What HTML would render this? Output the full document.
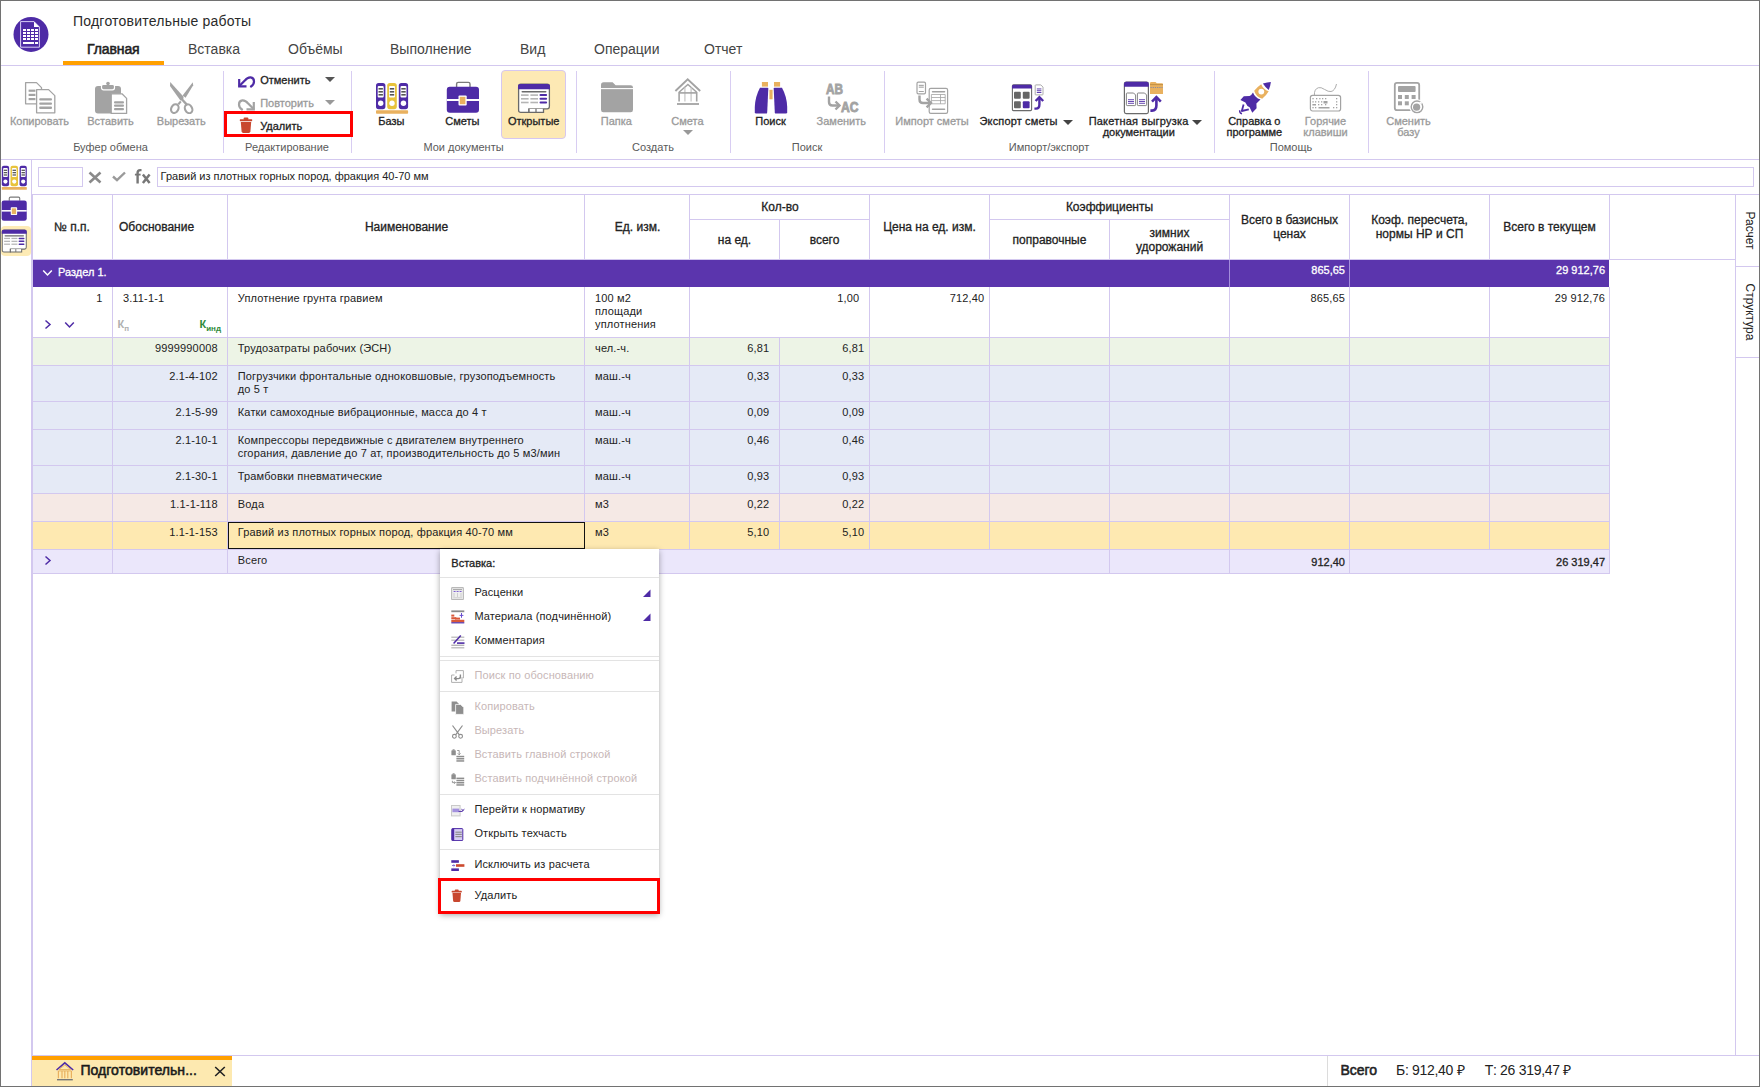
<!DOCTYPE html><html><head><meta charset="utf-8"><style>
html,body{margin:0;padding:0;}
body{width:1760px;height:1087px;position:relative;overflow:hidden;background:#fff;font-family:"Liberation Sans",sans-serif;}
.t{position:absolute;white-space:nowrap;}
.r{position:absolute;}
</style></head><body>
<svg class="r" style="left:13px;top:16px" width="36" height="36" viewBox="0 0 36 36"><circle cx="18" cy="18.4" r="17.5" fill="#4e2ba6"/>
<path d="M7.6 5.6 H21 L26.4 11 V31.2 H7.6 Z" fill="none" stroke="#d9cff5" stroke-width="1"/>
<path d="M21 5.6 V11 H26.4 Z" fill="#fff"/>
<g fill="#fff">
<rect x="10" y="13" width="3" height="2"/><rect x="14" y="13" width="3" height="2"/><rect x="18" y="13" width="3" height="2"/><rect x="22" y="13" width="3" height="2"/>
<rect x="10" y="16" width="3" height="2"/><rect x="14" y="16" width="3" height="2"/><rect x="18" y="16" width="3" height="2"/><rect x="22" y="16" width="3" height="2"/>
<rect x="10" y="19" width="3" height="2"/><rect x="14" y="19" width="3" height="2"/><rect x="18" y="19" width="3" height="2"/><rect x="22" y="19" width="3" height="2"/>
<rect x="10" y="22" width="3" height="2"/><rect x="14" y="22" width="3" height="2"/><rect x="18" y="22" width="3" height="2"/><rect x="22" y="22" width="3" height="2"/>
<rect x="10" y="26" width="11" height="2"/><rect x="22" y="26" width="3" height="2"/>
</g></svg>
<div class="t" style="top:14.00px;font-size:14px;line-height:14px;color:#2a2a2a;letter-spacing:0.22px;left:73px;">Подготовительные работы</div>
<div class="t" style="top:42.00px;font-size:14px;line-height:14px;color:#222;-webkit-text-stroke:0.55px #222;letter-spacing:-0.1px;left:87px;">Главная</div>
<div class="t" style="top:42.00px;font-size:14px;line-height:14px;color:#444;left:188px;">Вставка</div>
<div class="t" style="top:42.00px;font-size:14px;line-height:14px;color:#444;left:288px;">Объёмы</div>
<div class="t" style="top:42.00px;font-size:14px;line-height:14px;color:#444;left:390px;">Выполнение</div>
<div class="t" style="top:42.00px;font-size:14px;line-height:14px;color:#444;left:520px;">Вид</div>
<div class="t" style="top:42.00px;font-size:14px;line-height:14px;color:#444;left:594px;">Операции</div>
<div class="t" style="top:42.00px;font-size:14px;line-height:14px;color:#444;left:704px;">Отчет</div>
<div class="r" style="left:63px;top:61px;width:101px;height:4px;background:#ffa000;"></div>
<div class="r" style="left:1px;top:65px;width:1758px;height:1px;background:#d3c8ef;"></div>
<div class="r" style="left:1px;top:159px;width:1758px;height:1px;background:#d3c8ef;"></div>
<div class="r" style="left:223px;top:71px;width:1px;height:82px;background:#d8cdf2;"></div>
<div class="r" style="left:351px;top:71px;width:1px;height:82px;background:#d8cdf2;"></div>
<div class="r" style="left:576px;top:71px;width:1px;height:82px;background:#d8cdf2;"></div>
<div class="r" style="left:730px;top:71px;width:1px;height:82px;background:#d8cdf2;"></div>
<div class="r" style="left:884px;top:71px;width:1px;height:82px;background:#d8cdf2;"></div>
<div class="r" style="left:1214px;top:71px;width:1px;height:82px;background:#d8cdf2;"></div>
<div class="r" style="left:1368px;top:71px;width:1px;height:82px;background:#d8cdf2;"></div>
<div class="t" style="top:142.00px;font-size:11px;line-height:11px;color:#5a5a5a;left:-189.5px;width:600px;text-align:center;">Буфер обмена</div>
<div class="t" style="top:142.00px;font-size:11px;line-height:11px;color:#5a5a5a;left:-13px;width:600px;text-align:center;">Редактирование</div>
<div class="t" style="top:142.00px;font-size:11px;line-height:11px;color:#5a5a5a;left:163.5px;width:600px;text-align:center;">Мои документы</div>
<div class="t" style="top:142.00px;font-size:11px;line-height:11px;color:#5a5a5a;left:353px;width:600px;text-align:center;">Создать</div>
<div class="t" style="top:142.00px;font-size:11px;line-height:11px;color:#5a5a5a;left:507px;width:600px;text-align:center;">Поиск</div>
<div class="t" style="top:142.00px;font-size:11px;line-height:11px;color:#5a5a5a;left:749px;width:600px;text-align:center;">Импорт/экспорт</div>
<div class="t" style="top:142.00px;font-size:11px;line-height:11px;color:#5a5a5a;left:991px;width:600px;text-align:center;">Помощь</div>
<div class="t" style="top:116.00px;font-size:11px;line-height:11px;color:#9a9a9a;-webkit-text-stroke:0.3px #9a9a9a;left:-260.5px;width:600px;text-align:center;">Копировать</div>
<div class="t" style="top:116.00px;font-size:11px;line-height:11px;color:#9a9a9a;-webkit-text-stroke:0.3px #9a9a9a;left:-189.5px;width:600px;text-align:center;">Вставить</div>
<div class="t" style="top:116.00px;font-size:11px;line-height:11px;color:#9a9a9a;-webkit-text-stroke:0.3px #9a9a9a;left:-118.69999999999999px;width:600px;text-align:center;">Вырезать</div>
<div class="t" style="top:116.00px;font-size:11px;line-height:11px;color:#222;-webkit-text-stroke:0.3px #222;left:91.30000000000001px;width:600px;text-align:center;">Базы</div>
<div class="t" style="top:116.00px;font-size:11px;line-height:11px;color:#222;-webkit-text-stroke:0.3px #222;left:162.39999999999998px;width:600px;text-align:center;">Сметы</div>
<div class="r" style="left:501px;top:70px;width:65px;height:69px;background:#fde9b4;border:1px solid #d6c7f0;border-radius:4px;box-sizing:border-box;"></div>
<div class="t" style="top:116.00px;font-size:11px;line-height:11px;color:#222;-webkit-text-stroke:0.3px #222;left:233.70000000000005px;width:600px;text-align:center;">Открытые</div>
<div class="t" style="top:116.00px;font-size:11px;line-height:11px;color:#9a9a9a;-webkit-text-stroke:0.3px #9a9a9a;left:316.29999999999995px;width:600px;text-align:center;">Папка</div>
<div class="t" style="top:116.00px;font-size:11px;line-height:11px;color:#9a9a9a;-webkit-text-stroke:0.3px #9a9a9a;left:387.5px;width:600px;text-align:center;">Смета</div>
<div class="t" style="top:116.00px;font-size:11px;line-height:11px;color:#222;-webkit-text-stroke:0.3px #222;left:470.5px;width:600px;text-align:center;">Поиск</div>
<div class="t" style="top:116.00px;font-size:11px;line-height:11px;color:#9a9a9a;-webkit-text-stroke:0.3px #9a9a9a;left:541.3px;width:600px;text-align:center;">Заменить</div>
<div class="t" style="top:116.00px;font-size:11px;line-height:11px;color:#9a9a9a;-webkit-text-stroke:0.3px #9a9a9a;left:632px;width:600px;text-align:center;">Импорт сметы</div>
<div class="t" style="top:116.00px;font-size:11px;line-height:11px;color:#222;-webkit-text-stroke:0.3px #222;letter-spacing:0.15px;left:979.5px;">Экспорт сметы</div>
<div class="t" style="top:116.00px;font-size:11px;line-height:11px;color:#222;-webkit-text-stroke:0.3px #222;letter-spacing:0.2px;left:1088.7px;">Пакетная выгрузка</div>
<div class="t" style="top:127.00px;font-size:11px;line-height:11px;color:#222;-webkit-text-stroke:0.3px #222;left:838.8px;width:600px;text-align:center;">документации</div>
<div class="t" style="top:116.00px;font-size:11px;line-height:11px;color:#222;-webkit-text-stroke:0.3px #222;left:954.3px;width:600px;text-align:center;">Справка о</div>
<div class="t" style="top:127.00px;font-size:11px;line-height:11px;color:#222;-webkit-text-stroke:0.3px #222;left:954.3px;width:600px;text-align:center;">программе</div>
<div class="t" style="top:116.00px;font-size:11px;line-height:11px;color:#9a9a9a;-webkit-text-stroke:0.3px #9a9a9a;left:1025.5px;width:600px;text-align:center;">Горячие</div>
<div class="t" style="top:127.00px;font-size:11px;line-height:11px;color:#9a9a9a;-webkit-text-stroke:0.3px #9a9a9a;left:1025.5px;width:600px;text-align:center;">клавиши</div>
<div class="t" style="top:116.00px;font-size:11px;line-height:11px;color:#9a9a9a;-webkit-text-stroke:0.3px #9a9a9a;left:1108.5px;width:600px;text-align:center;">Сменить</div>
<div class="t" style="top:127.00px;font-size:11px;line-height:11px;color:#9a9a9a;-webkit-text-stroke:0.3px #9a9a9a;left:1108.5px;width:600px;text-align:center;">базу</div>
<div class="t" style="top:75.00px;font-size:11px;line-height:11px;color:#222;-webkit-text-stroke:0.3px #222;left:260.2px;">Отменить</div>
<div class="t" style="top:98.00px;font-size:11px;line-height:11px;color:#9a9a9a;-webkit-text-stroke:0.3px #9a9a9a;left:260.2px;">Повторить</div>
<div class="t" style="top:121.00px;font-size:11px;line-height:11px;color:#222;-webkit-text-stroke:0.3px #222;left:260.2px;">Удалить</div>
<svg class="r" style="left:325px;top:77px" width="10" height="5" viewBox="0 0 10 5"><path d="M0 0 H10 L5.0 5 Z" fill="#555"/></svg>
<svg class="r" style="left:325px;top:100px" width="10" height="5" viewBox="0 0 10 5"><path d="M0 0 H10 L5.0 5 Z" fill="#999"/></svg>
<svg class="r" style="left:682.5px;top:130px" width="10" height="5" viewBox="0 0 10 5"><path d="M0 0 H10 L5.0 5 Z" fill="#999"/></svg>
<svg class="r" style="left:1062.5px;top:119.5px" width="10" height="5" viewBox="0 0 10 5"><path d="M0 0 H10 L5.0 5 Z" fill="#444"/></svg>
<svg class="r" style="left:1192px;top:119.5px" width="10" height="5" viewBox="0 0 10 5"><path d="M0 0 H10 L5.0 5 Z" fill="#444"/></svg>
<div class="r" style="left:31px;top:160px;width:1px;height:926px;background:#d3c8ef;"></div>
<div class="r" style="left:1px;top:226px;width:30px;height:30px;background:#fdebb5;border-radius:4px;"></div>
<div class="r" style="left:38px;top:167px;width:45px;height:20px;background:#fff;border:1px solid #d3c8ef;box-sizing:border-box;"></div>
<div class="r" style="left:157px;top:167px;width:1597px;height:20px;background:#fff;border:1px solid #d3c8ef;box-sizing:border-box;"></div>
<svg class="r" style="left:88px;top:171px" width="14" height="13" viewBox="0 0 14 13"><path d="M1.5 1.5 L12.5 11.5 M12.5 1.5 L1.5 11.5" stroke="#8a8a8a" stroke-width="2.6" fill="none"/></svg>
<svg class="r" style="left:112px;top:171px" width="14" height="11" viewBox="0 0 14 11"><path d="M1 5.5 L5 9.2 L13 1.5" stroke="#9a9a9a" stroke-width="2.4" fill="none"/></svg>
<svg class="r" style="left:134px;top:168px" width="18" height="17" viewBox="0 0 18 17"><path d="M3.6 15.4 V4.8 Q3.6 2.1 6.1 2.1 H7.5" stroke="#777" stroke-width="2.4" fill="none"/><path d="M0.9 6.6 H6.6" stroke="#777" stroke-width="1.8"/><path d="M8.9 6.4 L15.6 14.9 M15.6 6.4 L8.9 14.9" stroke="#777" stroke-width="2.5"/></svg>
<div class="t" style="top:171.00px;font-size:11px;line-height:11px;color:#222;left:160.6px;">Гравий из плотных горных пород, фракция 40-70 мм</div>
<div class="r" style="left:32px;top:194px;width:1727px;height:1px;background:#d3c8ef;"></div>
<div class="r" style="left:1735px;top:194px;width:1px;height:861px;background:#d3c8ef;"></div>
<div class="r" style="left:32px;top:194px;width:1px;height:861px;background:#d3c8ef;"></div>
<div class="r" style="left:32px;top:1055px;width:1727px;height:1px;background:#d3c8ef;"></div>
<div class="r" style="left:1736px;top:266px;width:23px;height:1px;background:#d3c8ef;"></div>
<div class="r" style="left:1736px;top:357px;width:23px;height:1px;background:#d3c8ef;"></div>
<div class="t" style="left:1737.5px;top:195px;width:23px;height:71px;"><div style="position:absolute;left:23px;top:0;transform-origin:0 0;transform:rotate(90deg);width:71px;height:23px;line-height:23px;text-align:center;font-size:12px;color:#222;">Расчет</div></div>
<div class="t" style="left:1737.5px;top:267px;width:23px;height:90px;"><div style="position:absolute;left:23px;top:0;transform-origin:0 0;transform:rotate(90deg);width:90px;height:23px;line-height:23px;text-align:center;font-size:12px;color:#222;">Структура</div></div>
<div class="r" style="left:33px;top:195px;width:1576px;height:65px;background:#fff;"></div>
<div class="r" style="left:112px;top:195px;width:1px;height:65px;background:#d3c8ef;"></div>
<div class="r" style="left:227px;top:195px;width:1px;height:65px;background:#d3c8ef;"></div>
<div class="r" style="left:584px;top:195px;width:1px;height:65px;background:#d3c8ef;"></div>
<div class="r" style="left:689px;top:195px;width:1px;height:65px;background:#d3c8ef;"></div>
<div class="r" style="left:779px;top:195px;width:1px;height:65px;background:#d3c8ef;"></div>
<div class="r" style="left:869px;top:195px;width:1px;height:65px;background:#d3c8ef;"></div>
<div class="r" style="left:989px;top:195px;width:1px;height:65px;background:#d3c8ef;"></div>
<div class="r" style="left:1109px;top:195px;width:1px;height:65px;background:#d3c8ef;"></div>
<div class="r" style="left:1229px;top:195px;width:1px;height:65px;background:#d3c8ef;"></div>
<div class="r" style="left:1349px;top:195px;width:1px;height:65px;background:#d3c8ef;"></div>
<div class="r" style="left:1489px;top:195px;width:1px;height:65px;background:#d3c8ef;"></div>
<div class="r" style="left:1609px;top:195px;width:1px;height:65px;background:#d3c8ef;"></div>
<div class="r" style="left:1609px;top:259px;width:126px;height:1px;background:#d3c8ef;"></div>
<div class="r" style="left:690px;top:195px;width:179px;height:24px;background:#fff;"></div>
<div class="r" style="left:990px;top:195px;width:239px;height:24px;background:#fff;"></div>
<div class="r" style="left:1109px;top:195px;width:1px;height:0px;background:#d3c8ef;"></div>
<div class="r" style="left:689px;top:219px;width:180px;height:1px;background:#d3c8ef;"></div>
<div class="r" style="left:989px;top:219px;width:240px;height:1px;background:#d3c8ef;"></div>
<div class="t" style="top:221.00px;font-size:12px;line-height:12px;color:#222;-webkit-text-stroke:0.3px #222;left:-228px;width:600px;text-align:center;">№ п.п.</div>
<div class="t" style="top:221.00px;font-size:12px;line-height:12px;color:#222;-webkit-text-stroke:0.3px #222;left:119px;">Обоснование</div>
<div class="t" style="top:221.00px;font-size:12px;line-height:12px;color:#222;-webkit-text-stroke:0.3px #222;left:106.5px;width:600px;text-align:center;">Наименование</div>
<div class="t" style="top:221.00px;font-size:12px;line-height:12px;color:#222;-webkit-text-stroke:0.3px #222;left:337.5px;width:600px;text-align:center;">Ед. изм.</div>
<div class="t" style="top:201.00px;font-size:12px;line-height:12px;color:#222;-webkit-text-stroke:0.3px #222;left:480px;width:600px;text-align:center;">Кол-во</div>
<div class="t" style="top:234.00px;font-size:12px;line-height:12px;color:#222;-webkit-text-stroke:0.3px #222;left:434.5px;width:600px;text-align:center;">на ед.</div>
<div class="t" style="top:234.00px;font-size:12px;line-height:12px;color:#222;-webkit-text-stroke:0.3px #222;left:524.5px;width:600px;text-align:center;">всего</div>
<div class="t" style="top:221.00px;font-size:12px;line-height:12px;color:#222;-webkit-text-stroke:0.3px #222;left:629.5px;width:600px;text-align:center;">Цена на ед. изм.</div>
<div class="t" style="top:201.00px;font-size:12px;line-height:12px;color:#222;-webkit-text-stroke:0.3px #222;left:809.5px;width:600px;text-align:center;">Коэффициенты</div>
<div class="t" style="top:234.00px;font-size:12px;line-height:12px;color:#222;-webkit-text-stroke:0.3px #222;left:749.5px;width:600px;text-align:center;">поправочные</div>
<div class="t" style="top:227.00px;font-size:12px;line-height:12px;color:#222;-webkit-text-stroke:0.3px #222;left:869.5px;width:600px;text-align:center;">зимних</div>
<div class="t" style="top:241.00px;font-size:12px;line-height:12px;color:#222;-webkit-text-stroke:0.3px #222;left:869.5px;width:600px;text-align:center;">удорожаний</div>
<div class="t" style="top:214.00px;font-size:12px;line-height:12px;color:#222;-webkit-text-stroke:0.3px #222;left:989.5px;width:600px;text-align:center;">Всего в базисных</div>
<div class="t" style="top:228.00px;font-size:12px;line-height:12px;color:#222;-webkit-text-stroke:0.3px #222;left:989.5px;width:600px;text-align:center;">ценах</div>
<div class="t" style="top:214.00px;font-size:12px;line-height:12px;color:#222;-webkit-text-stroke:0.3px #222;left:1119.5px;width:600px;text-align:center;">Коэф. пересчета,</div>
<div class="t" style="top:228.00px;font-size:12px;line-height:12px;color:#222;-webkit-text-stroke:0.3px #222;left:1119.5px;width:600px;text-align:center;">нормы НР и СП</div>
<div class="t" style="top:221.00px;font-size:12px;line-height:12px;color:#222;-webkit-text-stroke:0.3px #222;left:1249.5px;width:600px;text-align:center;">Всего в текущем</div>
<div class="r" style="left:32px;top:259px;width:1577px;height:1px;background:#d3c8ef;"></div>
<div class="r" style="left:33px;top:260px;width:1576px;height:27px;background:#5b35ad;"></div>
<div class="r" style="left:1229px;top:260px;width:1px;height:27px;background:#a48ddc;"></div>
<div class="r" style="left:1349px;top:260px;width:1px;height:27px;background:#a48ddc;"></div>
<svg class="r" style="left:42px;top:269px" width="11" height="8" viewBox="0 0 11 8"><path d="M1.2 1.5 L5.5 6 L9.8 1.5" stroke="#fff" stroke-width="1.5" fill="none"/></svg>
<div class="t" style="top:267.00px;font-size:11px;line-height:11px;color:#fff;-webkit-text-stroke:0.3px #fff;left:58px;">Раздел 1.</div>
<div class="t" style="top:265.00px;font-size:11px;line-height:11px;color:#fff;-webkit-text-stroke:0.3px #fff;right:415px;text-align:right;">865,65</div>
<div class="t" style="top:265.00px;font-size:11px;line-height:11px;color:#fff;-webkit-text-stroke:0.3px #fff;right:155px;text-align:right;">29 912,76</div>
<div class="r" style="left:33px;top:287px;width:1576px;height:50px;background:#ffffff;"></div>
<div class="r" style="left:33px;top:337px;width:1576px;height:28px;background:#edf4e6;"></div>
<div class="r" style="left:33px;top:365px;width:1576px;height:36px;background:#e5eaf6;"></div>
<div class="r" style="left:33px;top:401px;width:1576px;height:28px;background:#e5eaf6;"></div>
<div class="r" style="left:33px;top:429px;width:1576px;height:36px;background:#e5eaf6;"></div>
<div class="r" style="left:33px;top:465px;width:1576px;height:28px;background:#e5eaf6;"></div>
<div class="r" style="left:33px;top:493px;width:1576px;height:28px;background:#f5e9e5;"></div>
<div class="r" style="left:33px;top:521px;width:1576px;height:28px;background:#fee9b1;"></div>
<div class="r" style="left:33px;top:549px;width:1576px;height:24px;background:#ebe7fb;"></div>
<div class="r" style="left:32px;top:337px;width:1578px;height:1px;background:#d3c8ef;"></div>
<div class="r" style="left:112px;top:287px;width:1px;height:50px;background:#d3c8ef;"></div>
<div class="r" style="left:227px;top:287px;width:1px;height:50px;background:#d3c8ef;"></div>
<div class="r" style="left:584px;top:287px;width:1px;height:50px;background:#d3c8ef;"></div>
<div class="r" style="left:689px;top:287px;width:1px;height:50px;background:#d3c8ef;"></div>
<div class="r" style="left:869px;top:287px;width:1px;height:50px;background:#d3c8ef;"></div>
<div class="r" style="left:989px;top:287px;width:1px;height:50px;background:#d3c8ef;"></div>
<div class="r" style="left:1109px;top:287px;width:1px;height:50px;background:#d3c8ef;"></div>
<div class="r" style="left:1229px;top:287px;width:1px;height:50px;background:#d3c8ef;"></div>
<div class="r" style="left:1349px;top:287px;width:1px;height:50px;background:#d3c8ef;"></div>
<div class="r" style="left:1489px;top:287px;width:1px;height:50px;background:#d3c8ef;"></div>
<div class="r" style="left:1609px;top:287px;width:1px;height:50px;background:#d3c8ef;"></div>
<div class="r" style="left:32px;top:365px;width:1578px;height:1px;background:#d3c8ef;"></div>
<div class="r" style="left:112px;top:337px;width:1px;height:28px;background:#d3c8ef;"></div>
<div class="r" style="left:227px;top:337px;width:1px;height:28px;background:#d3c8ef;"></div>
<div class="r" style="left:584px;top:337px;width:1px;height:28px;background:#d3c8ef;"></div>
<div class="r" style="left:689px;top:337px;width:1px;height:28px;background:#d3c8ef;"></div>
<div class="r" style="left:779px;top:337px;width:1px;height:28px;background:#d3c8ef;"></div>
<div class="r" style="left:869px;top:337px;width:1px;height:28px;background:#d3c8ef;"></div>
<div class="r" style="left:989px;top:337px;width:1px;height:28px;background:#d3c8ef;"></div>
<div class="r" style="left:1109px;top:337px;width:1px;height:28px;background:#d3c8ef;"></div>
<div class="r" style="left:1229px;top:337px;width:1px;height:28px;background:#d3c8ef;"></div>
<div class="r" style="left:1349px;top:337px;width:1px;height:28px;background:#d3c8ef;"></div>
<div class="r" style="left:1489px;top:337px;width:1px;height:28px;background:#d3c8ef;"></div>
<div class="r" style="left:1609px;top:337px;width:1px;height:28px;background:#d3c8ef;"></div>
<div class="r" style="left:32px;top:401px;width:1578px;height:1px;background:#d3c8ef;"></div>
<div class="r" style="left:112px;top:365px;width:1px;height:36px;background:#d3c8ef;"></div>
<div class="r" style="left:227px;top:365px;width:1px;height:36px;background:#d3c8ef;"></div>
<div class="r" style="left:584px;top:365px;width:1px;height:36px;background:#d3c8ef;"></div>
<div class="r" style="left:689px;top:365px;width:1px;height:36px;background:#d3c8ef;"></div>
<div class="r" style="left:779px;top:365px;width:1px;height:36px;background:#d3c8ef;"></div>
<div class="r" style="left:869px;top:365px;width:1px;height:36px;background:#d3c8ef;"></div>
<div class="r" style="left:989px;top:365px;width:1px;height:36px;background:#d3c8ef;"></div>
<div class="r" style="left:1109px;top:365px;width:1px;height:36px;background:#d3c8ef;"></div>
<div class="r" style="left:1229px;top:365px;width:1px;height:36px;background:#d3c8ef;"></div>
<div class="r" style="left:1349px;top:365px;width:1px;height:36px;background:#d3c8ef;"></div>
<div class="r" style="left:1489px;top:365px;width:1px;height:36px;background:#d3c8ef;"></div>
<div class="r" style="left:1609px;top:365px;width:1px;height:36px;background:#d3c8ef;"></div>
<div class="r" style="left:32px;top:429px;width:1578px;height:1px;background:#d3c8ef;"></div>
<div class="r" style="left:112px;top:401px;width:1px;height:28px;background:#d3c8ef;"></div>
<div class="r" style="left:227px;top:401px;width:1px;height:28px;background:#d3c8ef;"></div>
<div class="r" style="left:584px;top:401px;width:1px;height:28px;background:#d3c8ef;"></div>
<div class="r" style="left:689px;top:401px;width:1px;height:28px;background:#d3c8ef;"></div>
<div class="r" style="left:779px;top:401px;width:1px;height:28px;background:#d3c8ef;"></div>
<div class="r" style="left:869px;top:401px;width:1px;height:28px;background:#d3c8ef;"></div>
<div class="r" style="left:989px;top:401px;width:1px;height:28px;background:#d3c8ef;"></div>
<div class="r" style="left:1109px;top:401px;width:1px;height:28px;background:#d3c8ef;"></div>
<div class="r" style="left:1229px;top:401px;width:1px;height:28px;background:#d3c8ef;"></div>
<div class="r" style="left:1349px;top:401px;width:1px;height:28px;background:#d3c8ef;"></div>
<div class="r" style="left:1489px;top:401px;width:1px;height:28px;background:#d3c8ef;"></div>
<div class="r" style="left:1609px;top:401px;width:1px;height:28px;background:#d3c8ef;"></div>
<div class="r" style="left:32px;top:465px;width:1578px;height:1px;background:#d3c8ef;"></div>
<div class="r" style="left:112px;top:429px;width:1px;height:36px;background:#d3c8ef;"></div>
<div class="r" style="left:227px;top:429px;width:1px;height:36px;background:#d3c8ef;"></div>
<div class="r" style="left:584px;top:429px;width:1px;height:36px;background:#d3c8ef;"></div>
<div class="r" style="left:689px;top:429px;width:1px;height:36px;background:#d3c8ef;"></div>
<div class="r" style="left:779px;top:429px;width:1px;height:36px;background:#d3c8ef;"></div>
<div class="r" style="left:869px;top:429px;width:1px;height:36px;background:#d3c8ef;"></div>
<div class="r" style="left:989px;top:429px;width:1px;height:36px;background:#d3c8ef;"></div>
<div class="r" style="left:1109px;top:429px;width:1px;height:36px;background:#d3c8ef;"></div>
<div class="r" style="left:1229px;top:429px;width:1px;height:36px;background:#d3c8ef;"></div>
<div class="r" style="left:1349px;top:429px;width:1px;height:36px;background:#d3c8ef;"></div>
<div class="r" style="left:1489px;top:429px;width:1px;height:36px;background:#d3c8ef;"></div>
<div class="r" style="left:1609px;top:429px;width:1px;height:36px;background:#d3c8ef;"></div>
<div class="r" style="left:32px;top:493px;width:1578px;height:1px;background:#d3c8ef;"></div>
<div class="r" style="left:112px;top:465px;width:1px;height:28px;background:#d3c8ef;"></div>
<div class="r" style="left:227px;top:465px;width:1px;height:28px;background:#d3c8ef;"></div>
<div class="r" style="left:584px;top:465px;width:1px;height:28px;background:#d3c8ef;"></div>
<div class="r" style="left:689px;top:465px;width:1px;height:28px;background:#d3c8ef;"></div>
<div class="r" style="left:779px;top:465px;width:1px;height:28px;background:#d3c8ef;"></div>
<div class="r" style="left:869px;top:465px;width:1px;height:28px;background:#d3c8ef;"></div>
<div class="r" style="left:989px;top:465px;width:1px;height:28px;background:#d3c8ef;"></div>
<div class="r" style="left:1109px;top:465px;width:1px;height:28px;background:#d3c8ef;"></div>
<div class="r" style="left:1229px;top:465px;width:1px;height:28px;background:#d3c8ef;"></div>
<div class="r" style="left:1349px;top:465px;width:1px;height:28px;background:#d3c8ef;"></div>
<div class="r" style="left:1489px;top:465px;width:1px;height:28px;background:#d3c8ef;"></div>
<div class="r" style="left:1609px;top:465px;width:1px;height:28px;background:#d3c8ef;"></div>
<div class="r" style="left:32px;top:521px;width:1578px;height:1px;background:#d3c8ef;"></div>
<div class="r" style="left:112px;top:493px;width:1px;height:28px;background:#d3c8ef;"></div>
<div class="r" style="left:227px;top:493px;width:1px;height:28px;background:#d3c8ef;"></div>
<div class="r" style="left:584px;top:493px;width:1px;height:28px;background:#d3c8ef;"></div>
<div class="r" style="left:689px;top:493px;width:1px;height:28px;background:#d3c8ef;"></div>
<div class="r" style="left:779px;top:493px;width:1px;height:28px;background:#d3c8ef;"></div>
<div class="r" style="left:869px;top:493px;width:1px;height:28px;background:#d3c8ef;"></div>
<div class="r" style="left:989px;top:493px;width:1px;height:28px;background:#d3c8ef;"></div>
<div class="r" style="left:1109px;top:493px;width:1px;height:28px;background:#d3c8ef;"></div>
<div class="r" style="left:1229px;top:493px;width:1px;height:28px;background:#d3c8ef;"></div>
<div class="r" style="left:1349px;top:493px;width:1px;height:28px;background:#d3c8ef;"></div>
<div class="r" style="left:1489px;top:493px;width:1px;height:28px;background:#d3c8ef;"></div>
<div class="r" style="left:1609px;top:493px;width:1px;height:28px;background:#d3c8ef;"></div>
<div class="r" style="left:32px;top:549px;width:1578px;height:1px;background:#d3c8ef;"></div>
<div class="r" style="left:112px;top:521px;width:1px;height:28px;background:#d3c8ef;"></div>
<div class="r" style="left:227px;top:521px;width:1px;height:28px;background:#d3c8ef;"></div>
<div class="r" style="left:584px;top:521px;width:1px;height:28px;background:#d3c8ef;"></div>
<div class="r" style="left:689px;top:521px;width:1px;height:28px;background:#d3c8ef;"></div>
<div class="r" style="left:779px;top:521px;width:1px;height:28px;background:#d3c8ef;"></div>
<div class="r" style="left:869px;top:521px;width:1px;height:28px;background:#d3c8ef;"></div>
<div class="r" style="left:989px;top:521px;width:1px;height:28px;background:#d3c8ef;"></div>
<div class="r" style="left:1109px;top:521px;width:1px;height:28px;background:#d3c8ef;"></div>
<div class="r" style="left:1229px;top:521px;width:1px;height:28px;background:#d3c8ef;"></div>
<div class="r" style="left:1349px;top:521px;width:1px;height:28px;background:#d3c8ef;"></div>
<div class="r" style="left:1489px;top:521px;width:1px;height:28px;background:#d3c8ef;"></div>
<div class="r" style="left:1609px;top:521px;width:1px;height:28px;background:#d3c8ef;"></div>
<div class="r" style="left:32px;top:573px;width:1578px;height:1px;background:#d3c8ef;"></div>
<div class="r" style="left:112px;top:549px;width:1px;height:24px;background:#d3c8ef;"></div>
<div class="r" style="left:227px;top:549px;width:1px;height:24px;background:#d3c8ef;"></div>
<div class="r" style="left:1109px;top:549px;width:1px;height:24px;background:#d3c8ef;"></div>
<div class="r" style="left:1229px;top:549px;width:1px;height:24px;background:#d3c8ef;"></div>
<div class="r" style="left:1349px;top:549px;width:1px;height:24px;background:#d3c8ef;"></div>
<div class="r" style="left:1609px;top:549px;width:1px;height:24px;background:#d3c8ef;"></div>
<div class="t" style="top:293.00px;font-size:11px;line-height:11px;color:#222;letter-spacing:0.15px;right:1657.5px;text-align:right;">1</div>
<div class="t" style="top:293.00px;font-size:11px;line-height:11px;color:#222;letter-spacing:0.15px;left:122.9px;">3.11-1-1</div>
<div class="t" style="top:293.00px;font-size:11px;line-height:11px;color:#222;letter-spacing:0.15px;left:237.8px;">Уплотнение грунта гравием</div>
<div class="t" style="top:293.00px;font-size:11px;line-height:11px;color:#222;letter-spacing:0.15px;left:595px;">100 м2</div>
<div class="t" style="top:306.00px;font-size:11px;line-height:11px;color:#222;letter-spacing:0.15px;left:595px;">площади</div>
<div class="t" style="top:319.00px;font-size:11px;line-height:11px;color:#222;letter-spacing:0.15px;left:595px;">уплотнения</div>
<div class="t" style="top:293.00px;font-size:11px;line-height:11px;color:#222;letter-spacing:0.15px;right:900.7px;text-align:right;">1,00</div>
<div class="t" style="top:293.00px;font-size:11px;line-height:11px;color:#222;letter-spacing:0.15px;right:775.8px;text-align:right;">712,40</div>
<div class="t" style="top:293.00px;font-size:11px;line-height:11px;color:#222;letter-spacing:0.15px;right:415px;text-align:right;">865,65</div>
<div class="t" style="top:293.00px;font-size:11px;line-height:11px;color:#222;letter-spacing:0.15px;right:155px;text-align:right;">29 912,76</div>
<svg class="r" style="left:43px;top:319px" width="10" height="11" viewBox="0 0 10 11"><path d="M2.5 1.5 L7 5.5 L2.5 9.5" stroke="#4e2ba6" stroke-width="1.5" fill="none"/></svg>
<svg class="r" style="left:64px;top:321px" width="11" height="8" viewBox="0 0 11 8"><path d="M1.2 1.5 L5.5 6 L9.8 1.5" stroke="#4e2ba6" stroke-width="1.5" fill="none"/></svg>
<div class="t" style="left:117.5px;top:319px;font-size:11px;line-height:11px;font-weight:700;color:#b0b0b0;">К<span style="font-size:8px;position:relative;top:3px;">п</span></div>
<div class="t" style="right:1539px;top:319px;font-size:11px;line-height:11px;font-weight:700;color:#2e8b3a;text-align:right;">К<span style="font-size:8px;position:relative;top:3px;">инд</span></div>
<div class="t" style="top:343.00px;font-size:11px;line-height:11px;color:#222;letter-spacing:0.15px;right:1542.3px;text-align:right;">9999990008</div>
<div class="t" style="top:343.00px;font-size:11px;line-height:11px;color:#222;letter-spacing:0.15px;left:237.8px;">Трудозатраты рабочих (ЭСН)</div>
<div class="t" style="top:343.00px;font-size:11px;line-height:11px;color:#222;letter-spacing:0.15px;left:595px;">чел.-ч.</div>
<div class="t" style="top:343.00px;font-size:11px;line-height:11px;color:#222;letter-spacing:0.15px;right:990.7px;text-align:right;">6,81</div>
<div class="t" style="top:343.00px;font-size:11px;line-height:11px;color:#222;letter-spacing:0.15px;right:895.8px;text-align:right;">6,81</div>
<div class="t" style="top:371.00px;font-size:11px;line-height:11px;color:#222;letter-spacing:0.15px;right:1542.3px;text-align:right;">2.1-4-102</div>
<div class="t" style="top:371.00px;font-size:11px;line-height:11px;color:#222;letter-spacing:0.15px;left:237.8px;">Погрузчики фронтальные одноковшовые, грузоподъемность</div>
<div class="t" style="top:384.00px;font-size:11px;line-height:11px;color:#222;letter-spacing:0.15px;left:237.8px;">до 5 т</div>
<div class="t" style="top:371.00px;font-size:11px;line-height:11px;color:#222;letter-spacing:0.15px;left:595px;">маш.-ч</div>
<div class="t" style="top:371.00px;font-size:11px;line-height:11px;color:#222;letter-spacing:0.15px;right:990.7px;text-align:right;">0,33</div>
<div class="t" style="top:371.00px;font-size:11px;line-height:11px;color:#222;letter-spacing:0.15px;right:895.8px;text-align:right;">0,33</div>
<div class="t" style="top:407.00px;font-size:11px;line-height:11px;color:#222;letter-spacing:0.15px;right:1542.3px;text-align:right;">2.1-5-99</div>
<div class="t" style="top:407.00px;font-size:11px;line-height:11px;color:#222;letter-spacing:0.15px;left:237.8px;">Катки самоходные вибрационные, масса до 4 т</div>
<div class="t" style="top:407.00px;font-size:11px;line-height:11px;color:#222;letter-spacing:0.15px;left:595px;">маш.-ч</div>
<div class="t" style="top:407.00px;font-size:11px;line-height:11px;color:#222;letter-spacing:0.15px;right:990.7px;text-align:right;">0,09</div>
<div class="t" style="top:407.00px;font-size:11px;line-height:11px;color:#222;letter-spacing:0.15px;right:895.8px;text-align:right;">0,09</div>
<div class="t" style="top:435.00px;font-size:11px;line-height:11px;color:#222;letter-spacing:0.15px;right:1542.3px;text-align:right;">2.1-10-1</div>
<div class="t" style="top:435.00px;font-size:11px;line-height:11px;color:#222;letter-spacing:0.15px;left:237.8px;">Компрессоры передвижные с двигателем внутреннего</div>
<div class="t" style="top:448.00px;font-size:11px;line-height:11px;color:#222;letter-spacing:0.15px;left:237.8px;">сгорания, давление до 7 ат, производительность до 5 м3/мин</div>
<div class="t" style="top:435.00px;font-size:11px;line-height:11px;color:#222;letter-spacing:0.15px;left:595px;">маш.-ч</div>
<div class="t" style="top:435.00px;font-size:11px;line-height:11px;color:#222;letter-spacing:0.15px;right:990.7px;text-align:right;">0,46</div>
<div class="t" style="top:435.00px;font-size:11px;line-height:11px;color:#222;letter-spacing:0.15px;right:895.8px;text-align:right;">0,46</div>
<div class="t" style="top:471.00px;font-size:11px;line-height:11px;color:#222;letter-spacing:0.15px;right:1542.3px;text-align:right;">2.1-30-1</div>
<div class="t" style="top:471.00px;font-size:11px;line-height:11px;color:#222;letter-spacing:0.15px;left:237.8px;">Трамбовки пневматические</div>
<div class="t" style="top:471.00px;font-size:11px;line-height:11px;color:#222;letter-spacing:0.15px;left:595px;">маш.-ч</div>
<div class="t" style="top:471.00px;font-size:11px;line-height:11px;color:#222;letter-spacing:0.15px;right:990.7px;text-align:right;">0,93</div>
<div class="t" style="top:471.00px;font-size:11px;line-height:11px;color:#222;letter-spacing:0.15px;right:895.8px;text-align:right;">0,93</div>
<div class="t" style="top:499.00px;font-size:11px;line-height:11px;color:#222;letter-spacing:0.15px;right:1542.3px;text-align:right;">1.1-1-118</div>
<div class="t" style="top:499.00px;font-size:11px;line-height:11px;color:#222;letter-spacing:0.15px;left:237.8px;">Вода</div>
<div class="t" style="top:499.00px;font-size:11px;line-height:11px;color:#222;letter-spacing:0.15px;left:595px;">м3</div>
<div class="t" style="top:499.00px;font-size:11px;line-height:11px;color:#222;letter-spacing:0.15px;right:990.7px;text-align:right;">0,22</div>
<div class="t" style="top:499.00px;font-size:11px;line-height:11px;color:#222;letter-spacing:0.15px;right:895.8px;text-align:right;">0,22</div>
<div class="t" style="top:527.00px;font-size:11px;line-height:11px;color:#222;letter-spacing:0.15px;right:1542.3px;text-align:right;">1.1-1-153</div>
<div class="t" style="top:527.00px;font-size:11px;line-height:11px;color:#222;letter-spacing:0.15px;left:237.8px;">Гравий из плотных горных пород, фракция 40-70 мм</div>
<div class="t" style="top:527.00px;font-size:11px;line-height:11px;color:#222;letter-spacing:0.15px;left:595px;">м3</div>
<div class="t" style="top:527.00px;font-size:11px;line-height:11px;color:#222;letter-spacing:0.15px;right:990.7px;text-align:right;">5,10</div>
<div class="t" style="top:527.00px;font-size:11px;line-height:11px;color:#222;letter-spacing:0.15px;right:895.8px;text-align:right;">5,10</div>
<div class="r" style="left:228px;top:522px;width:357px;height:27px;background:transparent;border:1px solid #111;box-sizing:border-box;"></div>
<svg class="r" style="left:43px;top:555px" width="10" height="11" viewBox="0 0 10 11"><path d="M2.5 1.5 L7 5.5 L2.5 9.5" stroke="#4e2ba6" stroke-width="1.5" fill="none"/></svg>
<div class="t" style="top:555.00px;font-size:11px;line-height:11px;color:#222;letter-spacing:0.15px;left:237.8px;">Всего</div>
<div class="t" style="top:557.00px;font-size:11px;line-height:11px;color:#222;-webkit-text-stroke:0.3px #222;right:415px;text-align:right;">912,40</div>
<div class="t" style="top:557.00px;font-size:11px;line-height:11px;color:#222;-webkit-text-stroke:0.3px #222;right:155px;text-align:right;">26 319,47</div>
<div class="r" style="left:32px;top:1056px;width:200px;height:30px;background:#fde9b0;"></div>
<div class="r" style="left:32px;top:1056px;width:200px;height:4px;background:#ffa000;"></div>
<div class="t" style="top:1063.00px;font-size:14px;line-height:14px;color:#1a1a1a;-webkit-text-stroke:0.55px #1a1a1a;letter-spacing:0.05px;left:80.4px;">Подготовительн...</div>
<svg class="r" style="left:214px;top:1066px" width="12" height="11" viewBox="0 0 12 11"><path d="M1.2 1 L10.8 10 M10.8 1 L1.2 10" stroke="#222" stroke-width="1.6" fill="none"/></svg>
<div class="r" style="left:1327px;top:1056px;width:1px;height:30px;background:#dcdcdc;"></div>
<div class="t" style="top:1063.00px;font-size:14px;line-height:14px;color:#222;-webkit-text-stroke:0.55px #222;left:1340.4px;">Всего</div>
<div class="t" style="top:1063.00px;font-size:14px;line-height:14px;color:#222;letter-spacing:-0.3px;left:1396px;">Б: 912,40 ₽</div>
<div class="t" style="top:1063.00px;font-size:14px;line-height:14px;color:#222;letter-spacing:-0.3px;left:1484.7px;">Т: 26 319,47 ₽</div>
<div class="r" style="left:440px;top:549px;width:219px;height:364px;background:#fff;box-shadow:0 2px 6px rgba(0,0,0,0.35);"></div>
<div class="t" style="top:558.00px;font-size:11px;line-height:11px;color:#222;-webkit-text-stroke:0.3px #222;left:451.3px;">Вставка:</div>
<div class="r" style="left:440px;top:577px;width:219px;height:1px;background:#e3e3e3;"></div>
<div class="r" style="left:440px;top:656px;width:219px;height:1px;background:#e3e3e3;"></div>
<div class="r" style="left:440px;top:660px;width:219px;height:1px;background:#e3e3e3;"></div>
<div class="r" style="left:440px;top:691px;width:219px;height:1px;background:#e3e3e3;"></div>
<div class="r" style="left:440px;top:794px;width:219px;height:1px;background:#e3e3e3;"></div>
<div class="r" style="left:440px;top:849px;width:219px;height:1px;background:#e3e3e3;"></div>
<div class="t" style="top:587.00px;font-size:11px;line-height:11px;color:#222;letter-spacing:0.12px;left:474.4px;">Расценки</div>
<div class="t" style="top:611.00px;font-size:11px;line-height:11px;color:#222;letter-spacing:0.12px;left:474.4px;">Материала (подчинённой)</div>
<div class="t" style="top:635.00px;font-size:11px;line-height:11px;color:#222;letter-spacing:0.12px;left:474.4px;">Комментария</div>
<div class="t" style="top:670.00px;font-size:11px;line-height:11px;color:#c7b7b7;letter-spacing:0.12px;left:474.4px;">Поиск по обоснованию</div>
<div class="t" style="top:701.00px;font-size:11px;line-height:11px;color:#c7b7b7;letter-spacing:0.12px;left:474.4px;">Копировать</div>
<div class="t" style="top:725.00px;font-size:11px;line-height:11px;color:#c7b7b7;letter-spacing:0.12px;left:474.4px;">Вырезать</div>
<div class="t" style="top:749.00px;font-size:11px;line-height:11px;color:#c7b7b7;letter-spacing:0.12px;left:474.4px;">Вставить главной строкой</div>
<div class="t" style="top:773.00px;font-size:11px;line-height:11px;color:#c7b7b7;letter-spacing:0.12px;left:474.4px;">Вставить подчинённой строкой</div>
<div class="t" style="top:804.00px;font-size:11px;line-height:11px;color:#222;letter-spacing:0.12px;left:474.4px;">Перейти к нормативу</div>
<div class="t" style="top:828.00px;font-size:11px;line-height:11px;color:#222;letter-spacing:0.12px;left:474.4px;">Открыть техчасть</div>
<div class="t" style="top:859.00px;font-size:11px;line-height:11px;color:#222;letter-spacing:0.12px;left:474.4px;">Исключить из расчета</div>
<div class="t" style="top:890.00px;font-size:11px;line-height:11px;color:#222;letter-spacing:0.12px;left:474.4px;">Удалить</div>
<svg class="r" style="left:643px;top:589px" width="8" height="8" viewBox="0 0 8 8"><path d="M0 8 L7.5 0.5 V8 Z" fill="#4e2ba6"/></svg>
<svg class="r" style="left:643px;top:613px" width="8" height="8" viewBox="0 0 8 8"><path d="M0 8 L7.5 0.5 V8 Z" fill="#4e2ba6"/></svg>
<div class="r" style="left:438px;top:878px;width:222px;height:36px;background:transparent;border:3px solid #ff0000;box-sizing:border-box;"></div>
<div class="r" style="left:224px;top:111px;width:129px;height:26px;background:transparent;border:3px solid #ff0000;box-sizing:border-box;"></div>
<div class="r" style="left:0px;top:0px;width:1760px;height:1087px;background:transparent;border:1px solid #727272;box-sizing:border-box;"></div>
<svg class="r" style="left:24px;top:81px" width="32" height="33" viewBox="0 0 32 33"><path d="M1.6 1.6 H12.5 L17.5 6.6 V22.8 H1.6 Z" fill="#fff" stroke="#a3a3a3" stroke-width="1.3" stroke-linejoin="round"/>
<g fill="#a3a3a3"><rect x="4.6" y="8.6" width="6.8" height="2.2"/><rect x="4.6" y="12.8" width="6.8" height="2.2"/><rect x="4.6" y="17" width="6.8" height="2.2"/></g>
<path d="M12.6 8.6 H24.6 L30.8 14.6 V31.8 H12.6 Z" fill="#fff" stroke="#a3a3a3" stroke-width="1.3" stroke-linejoin="round"/>
<g fill="#a3a3a3"><rect x="15.2" y="17.2" width="12.8" height="2.3" rx="1"/><rect x="15.2" y="21.4" width="12.8" height="2.3" rx="1"/><rect x="15.2" y="25.6" width="12.8" height="2.3" rx="1"/></g></svg>
<svg class="r" style="left:94px;top:81px" width="34" height="34" viewBox="0 0 34 34"><rect x="1" y="5" width="26" height="27.5" rx="3" fill="#a3a3a3"/>
<rect x="7.5" y="3.3" width="13" height="5.5" rx="2" fill="#a3a3a3" stroke="#fff" stroke-width="1.2"/>
<circle cx="14" cy="2.6" r="1.8" fill="#a3a3a3"/>
<path d="M17.2 12.8 H28 L32.6 17.4 V32.4 H17.2 Z" fill="#fff" stroke="#a3a3a3" stroke-width="1.3" stroke-linejoin="round"/>
<g fill="#a3a3a3"><rect x="20" y="20.2" width="10" height="2.2" rx="1"/><rect x="20" y="23.6" width="10" height="2.2" rx="1"/><rect x="20" y="27" width="10" height="2.2" rx="1"/></g></svg>
<svg class="r" style="left:169px;top:81px" width="25" height="33" viewBox="0 0 25 33"><path d="M1.2 1 L14.6 15.8 L14.2 18.8 L11.4 19.4 L1 5 Z" fill="#a3a3a3"/>
<path d="M12.6 18 L17.6 23.4" stroke="#a3a3a3" stroke-width="2.3"/>
<ellipse cx="19.6" cy="27.8" rx="3.5" ry="4.6" transform="rotate(-28 19.6 27.8)" fill="none" stroke="#a3a3a3" stroke-width="2.1"/>
<path d="M23.8 1.2 L24.2 4.2 L16.6 16.8 L13.6 14.6 Z" fill="#a3a3a3"/>
<path d="M11.8 20.4 L9.4 23.2" stroke="#a3a3a3" stroke-width="2.1"/>
<ellipse cx="5.8" cy="27.6" rx="3.5" ry="4.6" transform="rotate(28 5.8 27.6)" fill="none" stroke="#a3a3a3" stroke-width="2.1"/></svg>
<svg class="r" style="left:237px;top:74px" width="19" height="14" viewBox="0 0 19 14"><path d="M2.2 5 V12.3 H9.5" stroke="#4e2ba6" stroke-width="2.2" fill="none"/>
<path d="M2.6 11.8 L7.8 6.6 Q10.5 3.2 13.6 3.4 Q17 3.8 17 7.5 Q17 10.5 14 12.5" stroke="#4e2ba6" stroke-width="2.2" fill="none" stroke-linecap="round"/></svg>
<svg class="r" style="left:237px;top:97px" width="19" height="14" viewBox="0 0 19 14"><path d="M16.8 5 V12.3 H9.5" stroke="#a3a3a3" stroke-width="2.2" fill="none"/>
<path d="M16.4 11.8 L11.2 6.6 Q8.5 3.2 5.4 3.4 Q2 3.8 2 7.5 Q2 10.5 5 12.5" stroke="#a3a3a3" stroke-width="2.2" fill="none" stroke-linecap="round"/></svg>
<svg class="r" style="left:239px;top:117px" width="14" height="17" viewBox="0 0 14 17"><g transform="scale(1.0)"><rect x="0.8" y="2.2" width="12.4" height="2" rx="0.6" fill="#c8472f"/>
<rect x="4.6" y="0.6" width="4.8" height="2.4" rx="1" fill="#c8472f"/>
<path d="M1.8 5 H12.2 L11.4 14.6 Q11.2 16 9.8 16 H4.2 Q2.8 16 2.6 14.6 Z" fill="#c8472f"/></g></svg>
<svg class="r" style="left:375px;top:82px" width="34" height="32" viewBox="0 0 34 32"><g transform="scale(1.0)">
<rect x="1" y="1" width="9.4" height="26.2" rx="2.6" fill="#4e2ba6"/>
<rect x="12.2" y="1" width="9.6" height="26.2" rx="2.6" fill="#e8c33b"/>
<rect x="23.8" y="1" width="9.3" height="26.2" rx="2.6" fill="#4e2ba6"/>
<g fill="#fff"><rect x="2.7" y="4" width="6" height="11.5" rx="1"/><rect x="14" y="4" width="6" height="11.5" rx="1"/><rect x="25.5" y="4" width="6" height="11.5" rx="1"/>
<circle cx="5.7" cy="21.3" r="2.7"/><circle cx="17" cy="21.3" r="2.7"/><circle cx="28.45" cy="21.3" r="2.7"/></g>
<g fill="#555"><rect x="3.5" y="6" width="4.4" height="1.6"/><rect x="3.5" y="9" width="4.4" height="1.6"/><rect x="3.5" y="12" width="4.4" height="1.6"/>
<rect x="14.8" y="6" width="4.4" height="1.6"/><rect x="14.8" y="9" width="4.4" height="1.6"/><rect x="14.8" y="12" width="4.4" height="1.6"/>
<rect x="26.3" y="6" width="4.4" height="1.6"/><rect x="26.3" y="9" width="4.4" height="1.6"/><rect x="26.3" y="12" width="4.4" height="1.6"/></g>
<rect x="1" y="28.2" width="32.1" height="3.6" rx="0.8" fill="#e9b15f"/>
</g></svg>
<svg class="r" style="left:446px;top:81px" width="34" height="33" viewBox="0 0 34 33"><g transform="scale(1.0)">
<path d="M10.6 6 V3 Q10.6 1.4 12.2 1.4 H22.4 Q24 1.4 24 3 V6" stroke="#7a7a7a" stroke-width="1.4" fill="none"/>
<rect x="0.8" y="5.8" width="32.2" height="26" rx="3" fill="#4e2ba6"/>
<rect x="0.8" y="18" width="32.2" height="2" fill="#fff"/>
<rect x="12.5" y="14.5" width="8.2" height="10" rx="1" fill="#fff"/>
<rect x="13.8" y="15.8" width="5.6" height="7.4" fill="#e9b15f"/>
</g></svg>
<svg class="r" style="left:517px;top:83px" width="34" height="31" viewBox="0 0 34 31"><g transform="scale(1.0)">
<path d="M1.6 3.5 Q1.6 1.2 3.8 1.2 H30.2 Q32.4 1.2 32.4 3.5 V23.5 Q32.4 25.8 30.2 25.8 H12 V29.4 H3.8 Q1.6 29.4 1.6 27.2 Z" fill="#fff" stroke="#6a6a6a" stroke-width="1.3"/>
<path d="M1 3.4 Q1 1 3.6 1 H30.4 Q33 1 33 3.4 V6.2 H1 Z" fill="#4e2ba6"/>
<rect x="4.5" y="8" width="25" height="1.6" rx="0.8" fill="#6a6a6a"/>
<g fill="#b5b5b5"><rect x="4" y="11.3" width="7.6" height="1.6"/><rect x="13.4" y="11.3" width="7.6" height="1.6"/>
<rect x="4" y="15" width="7.6" height="1.6"/><rect x="13.4" y="15" width="7.6" height="1.6"/>
<rect x="4" y="18.7" width="7.6" height="1.6"/><rect x="13.4" y="18.7" width="7.6" height="1.6"/></g>
<g fill="#4e2ba6"><rect x="22.5" y="11.1" width="7.6" height="2" rx="1"/><rect x="22.5" y="14.8" width="7.6" height="2" rx="1"/><rect x="22.5" y="18.5" width="7.6" height="2" rx="1"/></g>
<path d="M12 25.8 V29.4 H26.5 V25.8" fill="#fff" stroke="#6a6a6a" stroke-width="1.3"/>
<path d="M19 25.8 V29.4" stroke="#6a6a6a" stroke-width="1.2"/>
</g></svg>
<svg class="r" style="left:600px;top:81px" width="34" height="33" viewBox="0 0 34 33"><path d="M1 4 Q1 1.3 3.6 1.3 H12.6 L15.6 4.2 H30.6 Q33 4.2 33 6.6 V28.8 Q33 31.3 30.6 31.3 H3.4 Q1 31.3 1 28.8 Z" fill="#a3a3a3"/>
<path d="M1 7.6 H33" stroke="#fff" stroke-width="1.1"/></svg>
<svg class="r" style="left:674px;top:78px" width="28" height="29" viewBox="0 0 28 29"><path d="M1.4 13 L13.7 1.4 L26.2 13" stroke="#a3a3a3" stroke-width="1.9" fill="none"/>
<path d="M5 14.2 L13.9 6.4 L22.7 14.2" stroke="#a3a3a3" stroke-width="1.5" fill="none"/>
<path d="M10.9 9.6 V23.6 M17.1 9.6 V23.6" stroke="#c9c9c9" stroke-width="1.3" fill="none"/>
<path d="M5 14.9 H22.7" stroke="#a3a3a3" stroke-width="1.6" fill="none"/>
<path d="M5.1 14 V23.6 M22.7 14 V23.6" stroke="#a3a3a3" stroke-width="1.6" fill="none"/>
<rect x="3" y="25.1" width="22" height="1.8" fill="#a3a3a3"/></svg>
<svg class="r" style="left:754px;top:81px" width="34" height="34" viewBox="0 0 34 34"><rect x="7.9" y="1" width="6.1" height="4.6" fill="#e9b15f"/><rect x="20" y="1" width="6.1" height="4.6" fill="#e9b15f"/>
<path d="M6 6.8 H13.6 Q14.3 6.8 14.3 7.6 L13.2 31.4 Q13.1 32.6 11.9 32.6 H2.1 Q0.8 32.6 0.8 31.3 V26 Q1.2 15.5 6 6.8 Z" fill="#4e2ba6"/>
<path d="M28 6.8 H20.4 Q19.7 6.8 19.7 7.6 L20.8 31.4 Q20.9 32.6 22.1 32.6 H31.9 Q33.2 32.6 33.2 31.3 V26 Q32.8 15.5 28 6.8 Z" fill="#4e2ba6"/>
<rect x="15.4" y="8.8" width="3.2" height="9.5" fill="#e9b15f"/></svg>
<svg class="r" style="left:825px;top:82px" width="35" height="32" viewBox="0 0 35 32"><text x="1" y="12.3" font-family="Liberation Sans" font-weight="700" font-size="15" fill="#a3a3a3" stroke="#a3a3a3" stroke-width="0.9" textLength="17" lengthAdjust="spacingAndGlyphs">AB</text>
<text x="16" y="30.2" font-family="Liberation Sans" font-weight="700" font-size="15" fill="#a3a3a3" stroke="#a3a3a3" stroke-width="0.9" textLength="17.5" lengthAdjust="spacingAndGlyphs">AC</text>
<path d="M4 14.5 V20 Q4 23.5 7.5 23.5 H14" stroke="#a3a3a3" stroke-width="2.4" fill="none"/>
<path d="M10.5 19.5 L14.5 23.5 L10.5 27.5" stroke="#a3a3a3" stroke-width="2.4" fill="none"/></svg>
<svg class="r" style="left:915px;top:81px" width="34" height="34" viewBox="0 0 34 34"><path d="M2 2.5 Q2 1.2 3.3 1.2 H9.2 Q10.5 1.2 10.5 2.5 V11.5 Q10.5 12.8 9.2 12.8 H3.3 Q2 12.8 2 11.5 Z" fill="#fff" stroke="#a3a3a3" stroke-width="1.2"/>
<g fill="#a3a3a3"><rect x="3.8" y="3.8" width="5" height="1.1"/><rect x="3.8" y="5.6" width="5" height="1.1"/><rect x="3.8" y="10" width="5" height="1"/></g>
<path d="M14.2 9 Q14.2 7.4 15.8 7.4 H31 Q32.6 7.4 32.6 9 V30.8 Q32.6 32.4 31 32.4 H15.8 Q14.2 32.4 14.2 30.8 Z" fill="#fff" stroke="#a3a3a3" stroke-width="1.2"/>
<g fill="#a3a3a3"><rect x="16.8" y="10" width="13.5" height="1.4" rx="0.7"/><rect x="16.8" y="27.5" width="13.5" height="1.4" rx="0.7"/></g>
<path d="M16.4 13.5 H30.2 V22.8 H16.4 Z M16.4 16.5 H30.2 M16.4 19.6 H30.2 M25.5 13.5 V22.8" fill="none" stroke="#a3a3a3" stroke-width="0.8"/>
<path d="M4.5 14.6 V18.5 Q4.5 22 8 22 H15" stroke="#a3a3a3" stroke-width="2.4" fill="none"/>
<path d="M11.6 17.6 L16 22 L11.6 26.4" stroke="#a3a3a3" stroke-width="2.4" fill="none"/></svg>
<svg class="r" style="left:1011px;top:84px" width="34" height="28" viewBox="0 0 34 28"><path d="M1.4 2 Q1.4 0.9 2.5 0.9 H19.5 Q20.6 0.9 20.6 2 V25.6 Q20.6 26.6 19.5 26.6 H2.5 Q1.4 26.6 1.4 25.6 Z" fill="#fff" stroke="#6a6a6a" stroke-width="1.1"/>
<path d="M1 2.4 Q1 0.8 2.6 0.8 H19.4 Q21 0.8 21 2.4 V4.6 H1 Z" fill="#4e2ba6"/>
<g fill="#666"><rect x="3" y="7.8" width="6.8" height="7" rx="1"/><rect x="11.8" y="7.8" width="6.8" height="7" rx="1"/><rect x="3" y="17.3" width="6.8" height="7" rx="1"/></g>
<rect x="11.8" y="17.3" width="6.8" height="7" rx="1" fill="#4e2ba6"/>
<path d="M24.2 1.5 Q24.2 0.9 24.8 0.9 H29.8 L32 3.1 V10.3 Q32 10.9 31.4 10.9 H24.8 Q24.2 10.9 24.2 10.3 Z" fill="#fff" stroke="#a3a3a3" stroke-width="0.9"/>
<g fill="#4e2ba6"><rect x="25.8" y="4.5" width="4.6" height="0.9"/><rect x="25.8" y="6.3" width="4.6" height="0.9"/><rect x="25.8" y="8.1" width="4.6" height="0.9"/></g>
<path d="M23.4 24.6 H25 Q28.4 24.6 28.4 20.5 V14" stroke="#4e2ba6" stroke-width="2.4" fill="none"/>
<path d="M24.6 17 L28.4 13.2 L32.2 17" stroke="#4e2ba6" stroke-width="2.4" fill="none"/></svg>
<svg class="r" style="left:1123px;top:81px" width="42" height="34" viewBox="0 0 42 34"><path d="M1.4 3 Q1.4 1.2 3.2 1.2 H23.6 Q25.4 1.2 25.4 3 V30.8 Q25.4 32.6 23.6 32.6 H3.2 Q1.4 32.6 1.4 30.8 Z" fill="#fff" stroke="#6a6a6a" stroke-width="1.2"/>
<path d="M1 3.2 Q1 0.8 3.4 0.8 H23.4 Q25.8 0.8 25.8 3.2 V5.8 H1 Z" fill="#4e2ba6"/>
<path d="M3.4 12.8 Q3.4 12 4.2 12 H10.6 L12.6 14 V23.8 Q12.6 24.6 11.8 24.6 H4.2 Q3.4 24.6 3.4 23.8 Z" fill="#fff" stroke="#777" stroke-width="0.9"/>
<path d="M14.4 12.8 Q14.4 12 15.2 12 H21.6 L23.6 14 V23.8 Q23.6 24.6 22.8 24.6 H15.2 Q14.4 24.6 14.4 23.8 Z" fill="#fff" stroke="#777" stroke-width="0.9"/>
<g fill="#4e2ba6" opacity="0.85"><rect x="5" y="18.2" width="6" height="1"/><rect x="5" y="20" width="6" height="1"/><rect x="5" y="21.8" width="6" height="1"/>
<rect x="16" y="18.2" width="6" height="1"/><rect x="16" y="20" width="6" height="1"/><rect x="16" y="21.8" width="6" height="1"/></g>
<path d="M27 2.2 Q27 1 28.2 1 H32.5 L33.8 2.2 H39 Q40 2.2 40 3.2 V13 H27 Z" fill="#e9b15f"/>
<path d="M27 3.6 H40" stroke="#b8893e" stroke-width="0.8"/>
<path d="M27.5 6.5 H39.5" stroke="#8a8aa0" stroke-width="1" stroke-dasharray="1.2 1"/>
<path d="M27.4 29.6 H29 Q33.4 29.6 33.4 24.6 V17" stroke="#4e2ba6" stroke-width="2.6" fill="none"/>
<path d="M29 20.6 L33.4 16.2 L37.8 20.6" stroke="#4e2ba6" stroke-width="2.6" fill="none"/></svg>
<svg class="r" style="left:1238px;top:81px" width="34" height="34" viewBox="0 0 34 34"><path d="M32.9 1.1 Q29.5 1.2 24.9 2.4 Q27.5 6.6 30.7 8.9 Q32.5 5 32.9 1.1 Z" fill="#4e2ba6"/>
<path d="M23.2 3.2 Q19.2 5.9 16.2 9.7 Q17.6 15.6 24.2 17.7 Q28.3 14.6 30.7 10.3 Q25.2 8.4 23.2 3.2 Z" fill="#e9b15f"/>
<circle cx="23.3" cy="10.6" r="2.9" fill="#fff"/>
<path d="M15 11.4 Q13.6 13.9 11.6 15.1 L5.8 15.3 L2.4 19.1 L7.4 21.4 Q8.8 25 11.6 26.2 L14.3 31.7 L18.6 27.3 L18.4 22.5 L22.5 18.4 Q16.8 16.6 15 11.4 Z" fill="#4e2ba6"/>
<path d="M5.6 23.4 L3.8 30 L10.8 28.4" stroke="#4e2ba6" stroke-width="1.8" fill="none" stroke-linejoin="round"/>
<path d="M1.6 29.2 Q1.6 32.3 4 32.8" stroke="#4e2ba6" stroke-width="1.4" fill="none"/></svg>
<svg class="r" style="left:1309px;top:83px" width="33" height="30" viewBox="0 0 33 30"><path d="M5.4 12.4 Q5 6 9.5 4.7 Q12 4 15.5 6.4 Q19.5 9 22 8.5 Q26 7.8 27.5 1" stroke="#a3a3a3" stroke-width="0.9" fill="none"/>
<rect x="1.4" y="12.4" width="30.2" height="15.6" rx="2.2" fill="#fff" stroke="#a3a3a3" stroke-width="1.2"/>
<g fill="#a3a3a3"><rect x="3.4" y="15" width="1.3" height="1.3"/><rect x="7" y="15" width="1.3" height="1.3"/><rect x="10.2" y="15" width="1.3" height="1.3"/><rect x="13" y="15" width="1.3" height="1.3"/><rect x="16" y="15" width="1.3" height="1.3"/><rect x="27" y="15" width="1.3" height="1.3"/>
<rect x="3.4" y="18.2" width="1.3" height="1.3"/><rect x="6" y="18.2" width="1.3" height="1.3"/><rect x="9" y="18.2" width="1.3" height="1.3"/><rect x="12" y="18.2" width="1.3" height="1.3"/><rect x="14.5" y="18" width="4" height="2.5"/><rect x="27" y="18.2" width="1.3" height="1.3"/>
<rect x="3.4" y="21" width="3.6" height="1.5"/><rect x="9" y="21" width="1.3" height="1.3"/><rect x="12" y="21" width="1.3" height="1.3"/><rect x="16" y="21" width="1.3" height="1.3"/><rect x="27" y="21" width="1.3" height="1.3"/>
<rect x="3.4" y="24" width="1.3" height="1.3"/><rect x="6" y="24" width="1.3" height="1.3"/><rect x="9.5" y="24" width="11" height="1.5"/><rect x="24" y="24" width="1.3" height="1.3"/><rect x="27" y="24" width="1.3" height="1.3"/></g></svg>
<svg class="r" style="left:1393px;top:81px" width="34" height="34" viewBox="0 0 34 34"><rect x="1.8" y="1.8" width="24.4" height="27.4" rx="2.2" fill="#fff" stroke="#a3a3a3" stroke-width="1.8"/>
<rect x="5" y="5" width="17.6" height="6" rx="1" fill="#a3a3a3"/>
<g fill="#a3a3a3"><rect x="5" y="14" width="4" height="4"/><rect x="11.8" y="14" width="4" height="4"/><rect x="18.6" y="14" width="4" height="4"/>
<rect x="5" y="20.3" width="4" height="4"/><rect x="11.8" y="20.3" width="4" height="4"/></g>
<circle cx="24" cy="25.8" r="7.6" fill="#fff"/>
<circle cx="24" cy="25.8" r="5.8" fill="none" stroke="#a3a3a3" stroke-width="1.4"/>
<circle cx="23.6" cy="26.2" r="3.6" fill="#a3a3a3"/>
<path d="M26 21 L29 20.5 L28.5 23.5" fill="#fff"/></svg>
<svg class="r" style="left:1.2px;top:164.6px" width="27" height="25" viewBox="0 0 27 25"><g transform="scale(0.78)">
<rect x="1" y="1" width="9.4" height="26.2" rx="2.6" fill="#4e2ba6"/>
<rect x="12.2" y="1" width="9.6" height="26.2" rx="2.6" fill="#e8c33b"/>
<rect x="23.8" y="1" width="9.3" height="26.2" rx="2.6" fill="#4e2ba6"/>
<g fill="#fff"><rect x="2.7" y="4" width="6" height="11.5" rx="1"/><rect x="14" y="4" width="6" height="11.5" rx="1"/><rect x="25.5" y="4" width="6" height="11.5" rx="1"/>
<circle cx="5.7" cy="21.3" r="2.7"/><circle cx="17" cy="21.3" r="2.7"/><circle cx="28.45" cy="21.3" r="2.7"/></g>
<g fill="#555"><rect x="3.5" y="6" width="4.4" height="1.6"/><rect x="3.5" y="9" width="4.4" height="1.6"/><rect x="3.5" y="12" width="4.4" height="1.6"/>
<rect x="14.8" y="6" width="4.4" height="1.6"/><rect x="14.8" y="9" width="4.4" height="1.6"/><rect x="14.8" y="12" width="4.4" height="1.6"/>
<rect x="26.3" y="6" width="4.4" height="1.6"/><rect x="26.3" y="9" width="4.4" height="1.6"/><rect x="26.3" y="12" width="4.4" height="1.6"/></g>
<rect x="1" y="28.2" width="32.1" height="3.6" rx="0.8" fill="#e9b15f"/>
</g></svg>
<svg class="r" style="left:1.4px;top:195.6px" width="27" height="26" viewBox="0 0 27 26"><g transform="scale(0.78)">
<path d="M10.6 6 V3 Q10.6 1.4 12.2 1.4 H22.4 Q24 1.4 24 3 V6" stroke="#7a7a7a" stroke-width="1.4" fill="none"/>
<rect x="0.8" y="5.8" width="32.2" height="26" rx="3" fill="#4e2ba6"/>
<rect x="0.8" y="18" width="32.2" height="2" fill="#fff"/>
<rect x="12.5" y="14.5" width="8.2" height="10" rx="1" fill="#fff"/>
<rect x="13.8" y="15.8" width="5.6" height="7.4" fill="#e9b15f"/>
</g></svg>
<svg class="r" style="left:1.4px;top:229.2px" width="27" height="24" viewBox="0 0 27 24"><g transform="scale(0.78)">
<path d="M1.6 3.5 Q1.6 1.2 3.8 1.2 H30.2 Q32.4 1.2 32.4 3.5 V23.5 Q32.4 25.8 30.2 25.8 H12 V29.4 H3.8 Q1.6 29.4 1.6 27.2 Z" fill="#fff" stroke="#6a6a6a" stroke-width="1.3"/>
<path d="M1 3.4 Q1 1 3.6 1 H30.4 Q33 1 33 3.4 V6.2 H1 Z" fill="#4e2ba6"/>
<rect x="4.5" y="8" width="25" height="1.6" rx="0.8" fill="#6a6a6a"/>
<g fill="#b5b5b5"><rect x="4" y="11.3" width="7.6" height="1.6"/><rect x="13.4" y="11.3" width="7.6" height="1.6"/>
<rect x="4" y="15" width="7.6" height="1.6"/><rect x="13.4" y="15" width="7.6" height="1.6"/>
<rect x="4" y="18.7" width="7.6" height="1.6"/><rect x="13.4" y="18.7" width="7.6" height="1.6"/></g>
<g fill="#4e2ba6"><rect x="22.5" y="11.1" width="7.6" height="2" rx="1"/><rect x="22.5" y="14.8" width="7.6" height="2" rx="1"/><rect x="22.5" y="18.5" width="7.6" height="2" rx="1"/></g>
<path d="M12 25.8 V29.4 H26.5 V25.8" fill="#fff" stroke="#6a6a6a" stroke-width="1.3"/>
<path d="M19 25.8 V29.4" stroke="#6a6a6a" stroke-width="1.2"/>
</g></svg>
<svg class="r" style="left:451px;top:587px" width="13" height="13" viewBox="0 0 13 13"><rect x="0.6" y="0.6" width="11.8" height="12" rx="0.8" fill="#efefef" stroke="#b9b9b9" stroke-width="1.1"/>
<rect x="2" y="2.2" width="9" height="0.9" fill="#999"/>
<g fill="#7d5fd0"><rect x="2.6" y="4" width="2" height="1"/><rect x="5.6" y="4" width="2" height="1"/><rect x="8.6" y="4" width="2" height="1"/></g>
<path d="M3 6 V10 M6.5 6 V10 M10 6 V10 M2.2 10.8 H11" stroke="#c9c9c9" stroke-width="0.9"/></svg>
<svg class="r" style="left:451px;top:610px" width="14" height="14" viewBox="0 0 14 14"><rect x="0.3" y="0.4" width="13" height="1.8" fill="#8a8a8a"/>
<g fill="#d9583a"><rect x="0.3" y="4.6" width="3" height="2"/><rect x="0.3" y="7.2" width="5" height="2"/><rect x="0.3" y="9.8" width="13" height="2.4"/><rect x="4" y="7.6" width="5" height="2"/></g>
<rect x="0.3" y="12.2" width="13" height="1.2" fill="#4e2ba6"/>
<path d="M10.5 3 V7.8 M8.6 5.4 H12.4" stroke="#6a4fd0" stroke-width="1"/></svg>
<svg class="r" style="left:451px;top:635px" width="14" height="14" viewBox="0 0 14 14"><g fill="#b5b5b5"><rect x="0.3" y="1.6" width="13" height="1.2"/><rect x="0.3" y="4.6" width="13" height="1.2"/><rect x="0.3" y="9.6" width="13" height="1.4"/><rect x="0.3" y="12.2" width="13" height="1.2"/></g>
<path d="M2.6 8.6 L9.8 0.6" stroke="#4e2ba6" stroke-width="1.5"/>
<rect x="6" y="7.3" width="7.5" height="1.6" fill="#4e2ba6"/></svg>
<svg class="r" style="left:451px;top:670px" width="14" height="14" viewBox="0 0 14 14"><path d="M0.6 5 H3.5 M0.6 5 V12.4 H11 V9" fill="none" stroke="#b0b0b0" stroke-width="1"/>
<path d="M5 3.4 V0.6 H12.4 V8 H9" fill="none" stroke="#b0b0b0" stroke-width="1"/>
<path d="M9.4 4.4 V6.6 Q9.4 8.6 7.4 8.6 H3.6 M5.6 6.6 L3.6 8.6 L5.6 10.6" fill="none" stroke="#8a8a8a" stroke-width="1.4"/></svg>
<svg class="r" style="left:451px;top:701px" width="14" height="14" viewBox="0 0 14 14"><path d="M0.6 0.6 H5.6 L8 3 V10.4 H0.6 Z" fill="#8e8e8e"/>
<path d="M4.6 3.4 H9.6 L12.8 6.6 V13.4 H4.6 Z" fill="#8e8e8e" stroke="#fff" stroke-width="0.8"/></svg>
<svg class="r" style="left:451px;top:725px" width="13" height="14" viewBox="0 0 13 14"><path d="M1.5 0.5 L8.2 9.6 M11.5 0.5 L4.8 9.6" stroke="#8e8e8e" stroke-width="1.2"/>
<circle cx="3.4" cy="11.3" r="1.9" fill="none" stroke="#8e8e8e" stroke-width="1.1"/><circle cx="9.6" cy="11.3" r="1.9" fill="none" stroke="#8e8e8e" stroke-width="1.1"/></svg>
<svg class="r" style="left:451px;top:749px" width="14" height="14" viewBox="0 0 14 14"><rect x="0.4" y="1.3" width="4.4" height="5" rx="0.6" fill="#8e8e8e"/><rect x="1.6" y="0.3" width="2" height="1.2" fill="#8e8e8e"/>
<path d="M6.2 1.5 H8.2 V5.8 M6.8 4.4 L8.2 5.8 L9.6 4.4" stroke="#8e8e8e" stroke-width="0.9" fill="none"/>
<g fill="#8e8e8e"><rect x="5.4" y="6.8" width="7.8" height="1.5"/><rect x="5.4" y="9" width="7.8" height="1.5"/><rect x="5.4" y="11.2" width="7.8" height="1.5"/></g></svg>
<svg class="r" style="left:451px;top:773px" width="14" height="14" viewBox="0 0 14 14"><rect x="0.4" y="1.3" width="4.4" height="5" rx="0.6" fill="#8e8e8e"/><rect x="1.6" y="0.3" width="2" height="1.2" fill="#8e8e8e"/>
<path d="M1.4 7.8 V9.6 H4.4 M3.2 8.4 L4.4 9.6 L3.2 10.8" stroke="#8e8e8e" stroke-width="0.9" fill="none"/>
<g fill="#8e8e8e"><rect x="5.4" y="4.6" width="7.8" height="1.5"/><rect x="5.4" y="6.8" width="7.8" height="1.5"/><rect x="5.4" y="9" width="7.8" height="1.5"/><rect x="5.4" y="11.2" width="7.8" height="1.5"/></g></svg>
<svg class="r" style="left:451px;top:805px" width="14" height="12" viewBox="0 0 14 12"><rect x="0.5" y="0.5" width="8.6" height="10.4" fill="#efefef" stroke="#c9c9c9" stroke-width="1"/>
<rect x="1.4" y="3.6" width="6.8" height="3.6" fill="#a391de"/>
<path d="M7.6 6.4 H11 Q12 6.4 12 5.2 M10.4 4.2 L12 5.4 L13.4 4.2" stroke="#4e2ba6" stroke-width="1" fill="none"/></svg>
<svg class="r" style="left:451px;top:828px" width="13" height="13" viewBox="0 0 13 13"><rect x="0.8" y="0.6" width="11" height="12" rx="0.8" fill="#d7cdf3" stroke="#4e2ba6" stroke-width="1"/>
<rect x="0.8" y="0.6" width="2.4" height="12" fill="#4e2ba6"/>
<g fill="#8e8e8e"><rect x="4.4" y="3.6" width="6.4" height="1.2"/><rect x="4.4" y="5.8" width="6.4" height="1.2"/><rect x="4.4" y="8" width="6.4" height="1.2"/></g></svg>
<svg class="r" style="left:451px;top:860px" width="14" height="12" viewBox="0 0 14 12"><rect x="0.3" y="0.2" width="7.6" height="2.6" fill="#4e2ba6"/>
<rect x="0.3" y="8.4" width="7.6" height="2.6" fill="#4e2ba6"/>
<rect x="5" y="4.2" width="8.4" height="2.6" fill="#cc4a2e"/>
<path d="M1 5.5 H3.8 M2.6 4.3 L3.8 5.5 L2.6 6.7" stroke="#6a52c8" stroke-width="0.8" fill="none"/></svg>
<svg class="r" style="left:451px;top:889px" width="11" height="14" viewBox="0 0 11 14"><g transform="scale(0.82)"><rect x="0.8" y="2.2" width="12.4" height="2" rx="0.6" fill="#c8472f"/>
<rect x="4.6" y="0.6" width="4.8" height="2.4" rx="1" fill="#c8472f"/>
<path d="M1.8 5 H12.2 L11.4 14.6 Q11.2 16 9.8 16 H4.2 Q2.8 16 2.6 14.6 Z" fill="#c8472f"/></g></svg>
<svg class="r" style="left:55px;top:1061px" width="20" height="21" viewBox="0 0 20 21"><path d="M1.5 9 L9.8 1.8 L18.2 9" stroke="#4e2ba6" stroke-width="1.6" fill="none"/>
<path d="M4 8.5 L9.8 4 L15.6 8.5 Z" fill="none" stroke="#e9b15f" stroke-width="0.9"/>
<path d="M3.4 10 V17.2 M16.4 10 V17.2 M7 10 V17.2 M9.8 10 V17.2 M12.8 10 V17.2" stroke="#e9b15f" stroke-width="1.2"/>
<path d="M3.4 9.9 H16.4" stroke="#e3ad5c" stroke-width="0.9"/>
<rect x="2" y="18" width="15.8" height="1.4" fill="#777"/></svg>
</body></html>
